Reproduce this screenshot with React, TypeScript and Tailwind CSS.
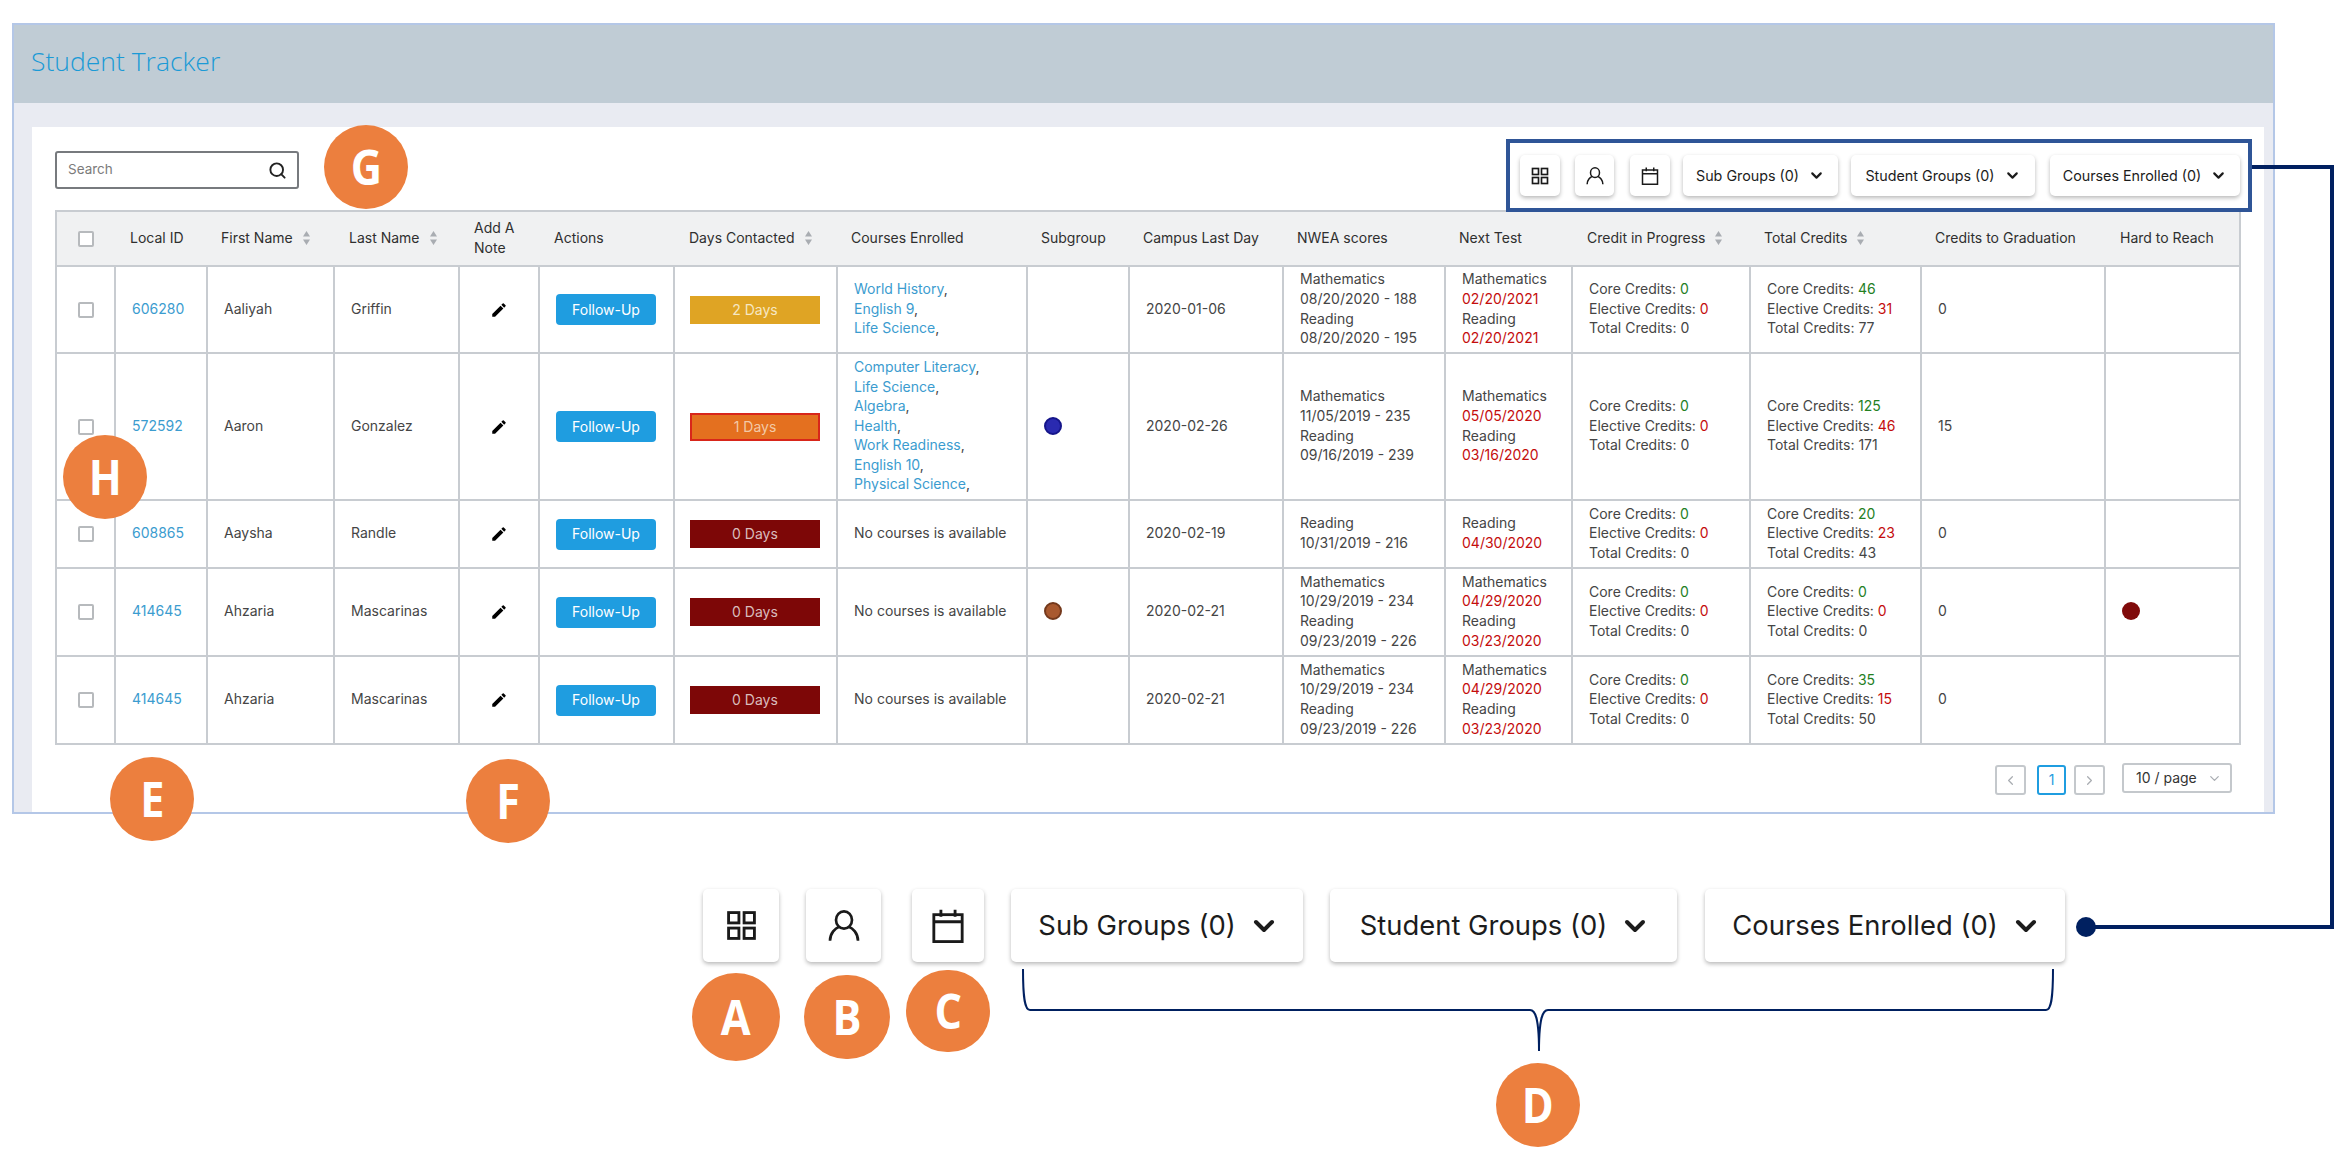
import { ChevronDown, ChevronLeft, ChevronRight, Search } from "lucide-react";
import { MdEdit } from "react-icons/md";

const widths = [59, 92, 127, 125, 80, 135, 163, 190, 102, 154, 162, 127, 178, 171, 184, 135];

type Row = {
  id: string;
  first: string;
  last: string;
  h: string;
  days: string;
  dayClass: string;
  courses: string[];
  subgroup?: string;
  lastDay: string;
  nwea: string[];
  next: string[];
  progress: [string, string, string];
  total: [string, string, string];
  grad: string;
  hard?: boolean;
};

const dayGold = "bg-[#dfa424] text-[#f6e7c3]";
const dayOrange = "bg-[#e4701f] text-[#f3c9a6] border-2 border-[#d8261a]";
const dayRed = "bg-[#7d0707] text-[#d9bcbc]";

const rows: Row[] = [
  { id: "606280", first: "Aaliyah", last: "Griffin", h: "h-[87px]", days: "2 Days", dayClass: dayGold, courses: ["World History", "English 9", "Life Science"], lastDay: "2020-01-06", nwea: ["Mathematics", "08/20/2020 - 188", "Reading", "08/20/2020 - 195"], next: ["Mathematics", "02/20/2021", "Reading", "02/20/2021"], progress: ["0", "0", "0"], total: ["46", "31", "77"], grad: "0" },
  { id: "572592", first: "Aaron", last: "Gonzalez", h: "h-[147px]", days: "1 Days", dayClass: dayOrange, courses: ["Computer Literacy", "Life Science", "Algebra", "Health", "Work Readiness", "English 10", "Physical Science"], subgroup: "bg-[#2a2ab0] border-2 border-[#15158a]", lastDay: "2020-02-26", nwea: ["Mathematics", "11/05/2019 - 235", "Reading", "09/16/2019 - 239"], next: ["Mathematics", "05/05/2020", "Reading", "03/16/2020"], progress: ["0", "0", "0"], total: ["125", "46", "171"], grad: "15" },
  { id: "608865", first: "Aaysha", last: "Randle", h: "h-[68px]", days: "0 Days", dayClass: dayRed, courses: [], lastDay: "2020-02-19", nwea: ["Reading", "10/31/2019 - 216"], next: ["Reading", "04/30/2020"], progress: ["0", "0", "0"], total: ["20", "23", "43"], grad: "0" },
  { id: "414645", first: "Ahzaria", last: "Mascarinas", h: "h-[88px]", days: "0 Days", dayClass: dayRed, courses: [], subgroup: "bg-[#a9592f] border-2 border-[#74391c]", lastDay: "2020-02-21", nwea: ["Mathematics", "10/29/2019 - 234", "Reading", "09/23/2019 - 226"], next: ["Mathematics", "04/29/2020", "Reading", "03/23/2020"], progress: ["0", "0", "0"], total: ["0", "0", "0"], grad: "0", hard: true },
  { id: "414645", first: "Ahzaria", last: "Mascarinas", h: "h-[88px]", days: "0 Days", dayClass: dayRed, courses: [], lastDay: "2020-02-21", nwea: ["Mathematics", "10/29/2019 - 234", "Reading", "09/23/2019 - 226"], next: ["Mathematics", "04/29/2020", "Reading", "03/23/2020"], progress: ["0", "0", "0"], total: ["35", "15", "50"], grad: "0" },
];

const GridIcon = ({ size }: { size: number }) => (
  <svg width={size} height={size} viewBox="0 0 24 24" fill="none" stroke="#1a1a1a" strokeWidth="2.2">
    <rect x="2" y="2" width="8" height="8" />
    <rect x="14" y="2" width="8" height="8" />
    <rect x="2" y="14" width="8" height="8" />
    <rect x="14" y="14" width="8" height="8" />
  </svg>
);

const PersonIcon = ({ size }: { size: number }) => (
  <svg width={size} height={size} viewBox="0 0 24 24" fill="none" stroke="#1a1a1a" strokeWidth="2">
    <ellipse cx="12" cy="7.5" rx="6" ry="6.5" />
    <path d="M1.5 23c0-5.5 4-9.5 7-10.5M22.5 23c0-5.5-4-9.5-7-10.5" />
  </svg>
);

const CalendarIcon = ({ size }: { size: number }) => (
  <svg width={size} height={size} viewBox="0 0 24 24" fill="none" stroke="#1a1a1a" strokeWidth="2">
    <rect x="2" y="4" width="20" height="19" />
    <path d="M2 9h20M7 0.5v5M17 0.5v5" />
  </svg>
);

const Sorter = () => (
  <svg width="9" height="16" viewBox="0 0 9 16" className="ml-[9px] inline-block align-[-3px]" fill="#a9adb2">
    <path d="M4.5 1 8 6.5H1zM4.5 15 1 9.5h7z" />
  </svg>
);

const HeaderCell = ({ label, sort, pad = "pl-[15px]" }: { label: string; sort?: boolean; pad?: string }) => (
  <th className={`${pad} pb-[2px] text-left font-normal text-[#2f2f2f] align-middle`}>
    {label}
    {sort && <Sorter />}
  </th>
);

const Check = () => <span className="block w-[16px] h-[16px] mx-auto border-2 border-[#b7babd] rounded-[2px] bg-white" />;

const Cell = ({ children, className = "" }: { children?: React.ReactNode; className?: string }) => (
  <td className={`border-2 border-[#c8ccd1] pl-[16px] pb-[2px] align-middle ${className}`}>{children}</td>
);

const CreditLines = ({ v }: { v: [string, string, string] }) => (
  <>
    <div>
      Core Credits: <span className="text-[#24801f]">{v[0]}</span>
    </div>
    <div>
      Elective Credits: <span className="text-[#c40d0d]">{v[1]}</span>
    </div>
    <div>Total Credits: {v[2]}</div>
  </>
);

const Badge = ({ letter, className }: { letter: string; className: string }) => (
  <div className={`absolute flex items-center justify-center rounded-full bg-[#ec7f3e] text-white font-bold text-[48px] font-['Open_Sans',sans-serif] ${className}`}>
    <span className="scale-x-90">{letter}</span>
  </div>
);

const ToolIcon = ({ className, children }: { className: string; children: React.ReactNode }) => (
  <div className={`flex items-center justify-center bg-white rounded-[5px] shadow-[0_2px_4px_rgba(0,0,0,0.28)] ${className}`}>{children}</div>
);

const ToolSelect = ({ label, className, big }: { label: string; className: string; big?: boolean }) => (
  <div className={`flex items-center justify-center bg-white rounded-[5px] shadow-[0_2px_4px_rgba(0,0,0,0.28)] text-[#1c1c1c] ${big ? "pl-[4px]" : ""} ${className}`}>
    {label}
    {big ? (
      <ChevronDown className="w-[32px] h-[32px] ml-[12px]" strokeWidth={3} />
    ) : (
      <ChevronDown className="w-[17px] h-[17px] ml-[9px]" strokeWidth={3} />
    )}
  </div>
);

export default function App() {
  return (
    <div className="relative w-[2350px] h-[1158px] bg-white overflow-hidden font-['Inter',sans-serif]">
      <div className="pt-[23px] pl-[12px]">
        <div className="w-[2263px] h-[791px] border-2 border-[#b4c7e7] flex flex-col bg-[#e9ebf2]">
          <div className="h-[78px] shrink-0 bg-[#c0ccd5] flex items-center pl-[17px] pb-[4px]">
            <span className="text-[26.5px] font-light text-[#1a9ad6] font-['Open_Sans',sans-serif]">Student Tracker</span>
          </div>
          <div className="flex-1 pt-[24px] pl-[18px] pr-[9px] min-h-0">
            <div className="bg-white h-full pl-[23px] pr-[24px] text-[14px] leading-[19.6px] text-[#454545]">
              <div className="h-[83px] flex justify-between pt-[24px]">
                <div className="w-[244px] h-[38px] border-2 border-[#777a7e] rounded-[3px] flex items-center justify-between pl-[11px] pr-[10px] text-[#7b7b7b] text-[13.5px]">
                  Search
                  <Search className="w-[19px] h-[19px] text-[#222]" strokeWidth={2.4} />
                </div>
                <div className="flex items-start pt-[4px] text-[14.3px]">
                  <ToolIcon className="w-[40px] h-[41px]">
                    <GridIcon size={18} />
                  </ToolIcon>
                  <ToolIcon className="w-[39px] h-[41px] ml-[15px]">
                    <PersonIcon size={18} />
                  </ToolIcon>
                  <ToolIcon className="w-[40px] h-[41px] ml-[16px]">
                    <CalendarIcon size={18} />
                  </ToolIcon>
                  <ToolSelect label="Sub Groups (0)" className="w-[155px] h-[41px] ml-[13px]" />
                  <ToolSelect label="Student Groups (0)" className="w-[184px] h-[41px] ml-[13px]" />
                  <ToolSelect label="Courses Enrolled (0)" className="w-[190px] h-[41px] ml-[15px]" />
                </div>
              </div>
              <table className="table-fixed border-collapse w-[2184px]">
                <colgroup>
                  {widths.map((w, i) => (
                    <col key={i} style={{ width: w }} />
                  ))}
                </colgroup>
                <thead>
                  <tr className="h-[55px] bg-[#f0f1f2] border-2 border-[#c8ccd1]">
                    <th className="align-middle">
                      <Check />
                    </th>
                    <HeaderCell label="Local ID" />
                    <HeaderCell label="First Name" sort pad="pl-[14px]" />
                    <HeaderCell label="Last Name" sort pad="pl-[15px]" />
                    <HeaderCell label="Add A Note" />
                    <HeaderCell label="Actions" />
                    <HeaderCell label="Days Contacted" sort />
                    <HeaderCell label="Courses Enrolled" pad="pl-[14px]" />
                    <HeaderCell label="Subgroup" pad="pl-[14px]" />
                    <HeaderCell label="Campus Last Day" pad="pl-[14px]" />
                    <HeaderCell label="NWEA scores" pad="pl-[14px]" />
                    <HeaderCell label="Next Test" pad="pl-[14px]" />
                    <HeaderCell label="Credit in Progress" sort />
                    <HeaderCell label="Total Credits" sort pad="pl-[14px]" />
                    <HeaderCell label="Credits to Graduation" pad="pl-[14px]" />
                    <HeaderCell label="Hard to Reach" pad="pl-[15px]" />
                  </tr>
                </thead>
                <tbody>
                  {rows.map((r, i) => (
                    <tr key={i} className={r.h}>
                      <td className="border-2 border-[#c8ccd1] align-middle">
                        <Check />
                      </td>
                      <Cell className="text-[#3b9ccf]">{r.id}</Cell>
                      <Cell>{r.first}</Cell>
                      <Cell>{r.last}</Cell>
                      <td className="border-2 border-[#c8ccd1] align-middle">
                        <MdEdit className="w-[18px] h-[18px] mx-auto text-black" />
                      </td>
                      <td className="border-2 border-[#c8ccd1] align-middle pl-[16px]">
                        <div className="w-[100px] h-[31px] rounded-[4px] bg-[#1f9de0] text-white flex items-center justify-center">Follow-Up</div>
                      </td>
                      <td className="border-2 border-[#c8ccd1] align-middle pl-[15px]">
                        <div className={`w-[130px] h-[28px] flex items-center justify-center ${r.dayClass}`}>{r.days}</div>
                      </td>
                      <Cell>
                        {r.courses.length === 0
                          ? "No courses is available"
                          : r.courses.map((c) => (
                              <div key={c}>
                                <span className="text-[#3b9ccf]">{c}</span>,
                              </div>
                            ))}
                      </Cell>
                      <Cell>{r.subgroup && <span className={`block w-[18px] h-[18px] rounded-full ${r.subgroup}`} />}</Cell>
                      <Cell>{r.lastDay}</Cell>
                      <Cell>
                        {r.nwea.map((n, k) => (
                          <div key={k}>{n}</div>
                        ))}
                      </Cell>
                      <Cell>
                        {r.next.map((n, k) => (
                          <div key={k} className={k % 2 === 1 ? "text-[#c40d0d]" : ""}>
                            {n}
                          </div>
                        ))}
                      </Cell>
                      <Cell>
                        <CreditLines v={r.progress} />
                      </Cell>
                      <Cell>
                        <CreditLines v={r.total} />
                      </Cell>
                      <Cell>{r.grad}</Cell>
                      <Cell>{r.hard && <span className="block w-[18px] h-[18px] rounded-full bg-[#800a0a]" />}</Cell>
                    </tr>
                  ))}
                </tbody>
              </table>
              <div className="flex justify-end items-start pt-[18px] pr-[8px]">
                <div className="w-[31px] h-[30px] mt-[2px] border-2 border-[#c4c8cc] rounded-[3px] flex items-center justify-center text-[#a9adb2]">
                  <ChevronLeft className="w-[15px] h-[15px]" />
                </div>
                <div className="w-[29px] h-[30px] mt-[2px] ml-[11px] border-2 border-[#1f9de0] rounded-[3px] flex items-center justify-center text-[#1f9de0]">1</div>
                <div className="w-[31px] h-[30px] mt-[2px] ml-[8px] border-2 border-[#c4c8cc] rounded-[3px] flex items-center justify-center text-[#a9adb2]">
                  <ChevronRight className="w-[15px] h-[15px]" />
                </div>
                <div className="w-[110px] h-[30px] ml-[17px] border-2 border-[#c4c8cc] rounded-[3px] flex items-center justify-between pl-[12px] pr-[8px] text-[#333]">
                  10 / page
                  <ChevronDown className="w-[15px] h-[15px] text-[#a9adb2]" />
                </div>
              </div>
            </div>
          </div>
        </div>
      </div>

      <div className="flex mt-[75px] pl-[703px] text-[27.4px]">
        <ToolIcon className="w-[76px] h-[73px]">
          <GridIcon size={31} />
        </ToolIcon>
        <ToolIcon className="w-[75px] h-[73px] ml-[27px]">
          <PersonIcon size={32} />
        </ToolIcon>
        <ToolIcon className="w-[72px] h-[73px] ml-[31px]">
          <CalendarIcon size={34} />
        </ToolIcon>
        <ToolSelect big label="Sub Groups (0)" className="w-[292px] h-[73px] ml-[27px]" />
        <ToolSelect big label="Student Groups (0)" className="w-[347px] h-[73px] ml-[27px]" />
        <ToolSelect big label="Courses Enrolled (0)" className="w-[360px] h-[73px] ml-[28px]" />
      </div>

      {/* annotation layer */}
      <div className="absolute left-[1506px] top-[139px] w-[746px] h-[73px] border-4 border-[#2f5597]" />
      <svg className="absolute left-0 top-0 pointer-events-none" width="2350" height="1158" fill="none">
        <path d="M2252 167H2332V927H2090" stroke="#002060" strokeWidth="4" />
        <ellipse cx="2086" cy="927" rx="10" ry="10" fill="#002060" />
        <path d="M1023 969C1023 1000 1025 1010 1030 1010H1530C1536 1010 1539 1020 1539 1051C1539 1020 1542 1010 1548 1010H2046C2051 1010 2053 1000 2053 969" stroke="#002060" strokeWidth="2" />
      </svg>
      <Badge letter="G" className="left-[324px] top-[125px] w-[84px] h-[84px]" />
      <Badge letter="H" className="left-[63px] top-[435px] w-[84px] h-[84px]" />
      <Badge letter="E" className="left-[110px] top-[757px] w-[84px] h-[84px]" />
      <Badge letter="F" className="left-[466px] top-[759px] w-[84px] h-[84px]" />
      <Badge letter="A" className="left-[692px] top-[973px] w-[88px] h-[88px]" />
      <Badge letter="B" className="left-[804px] top-[975px] w-[86px] h-[84px]" />
      <Badge letter="C" className="left-[906px] top-[970px] w-[84px] h-[82px]" />
      <Badge letter="D" className="left-[1496px] top-[1063px] w-[84px] h-[84px]" />
    </div>
  );
}
